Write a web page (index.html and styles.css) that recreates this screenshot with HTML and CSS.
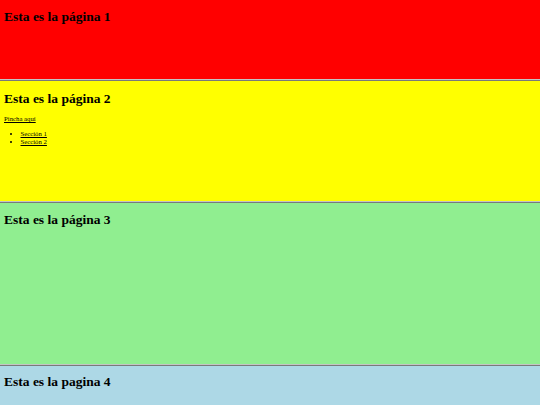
FILE: index.html
```html
<!DOCTYPE html>
<html lang="es">
<head>
<meta charset="utf-8">
<title>Páginas</title>
<link rel="stylesheet" href="styles.css">
</head>
<body>
<section class="page page-1" id="pagina1">
  <h2 class="title">Esta es la página 1</h2>
</section>
<hr class="sep">
<section class="page page-2" id="pagina2">
  <h2 class="title">Esta es la página 2</h2>
  <p class="text"><a class="link" href="#pagina3">Pincha aquí</a></p>
  <ul class="list">
    <li><a class="link" href="#seccion1">Sección 1</a></li>
    <li><a class="link" href="#seccion2">Sección 2</a></li>
  </ul>
</section>
<hr class="sep">
<section class="page page-3" id="pagina3">
  <h2 class="title">Esta es la página 3</h2>
</section>
<hr class="sep">
<section class="page page-4" id="pagina4">
  <h2 class="title">Esta es la pagina 4</h2>
</section>
</body>
</html>
```

FILE: styles.css
```css
html, body {
  margin: 0;
  padding: 0;
  background: #ffffff;
}
body {
  font-family: "Liberation Serif", "Times New Roman", serif;
  color: #000;
}
.page {
  box-sizing: border-box;
  padding: 9px 4px 0;
  overflow: hidden;
}
.page-1 { background: #ff0000; height: 79px; }
.page-2 { background: #ffff00; height: 120px; padding-top: 10px; }
.page-3 { background: #90ee90; height: 161px; }
.page-4 { background: #add8e6; height: 39px; padding-top: 8px; }
.title {
  margin: 0;
  font-size: 13.5px;
  font-weight: bold;
  line-height: 15.5px;
}
.sep {
  margin: 0;
  height: 0;
  border: 0;
  border-top: 1px solid #c4c4c4;
  border-bottom: 1px solid #7a7a7a;
}
.text {
  margin: 8.5px 0 0;
  font-size: 6.75px;
  line-height: 8px;
}
.list {
  margin: 6.5px 0 0;
  padding-left: 16.5px;
  font-size: 6.75px;
  line-height: 8px;
}
.link {
  color: #000;
  text-decoration: underline;
}
```
